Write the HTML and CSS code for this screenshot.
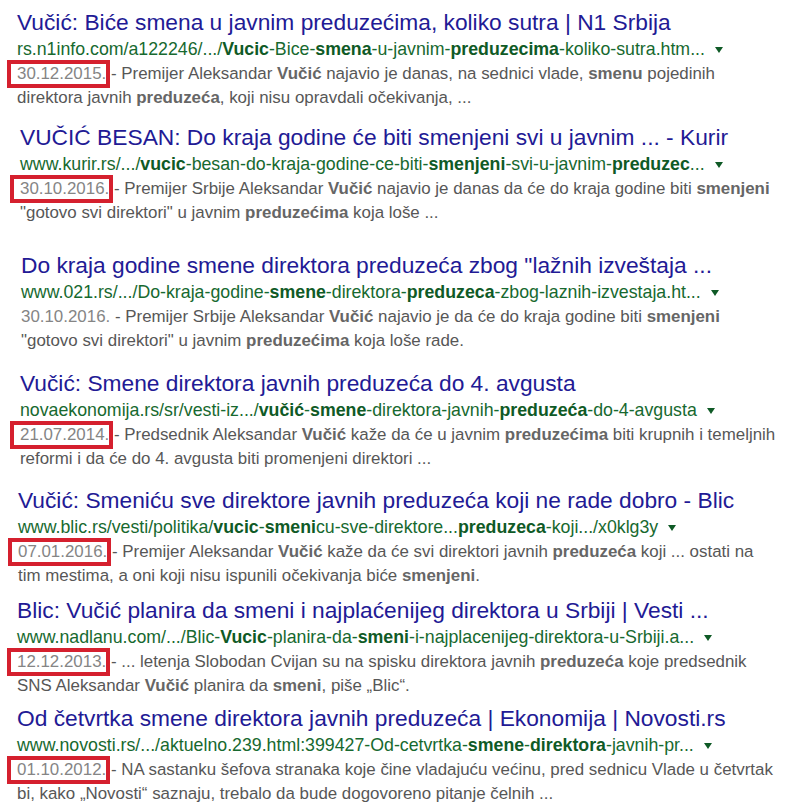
FILE: index.html
```html
<!DOCTYPE html>
<html lang="sr">
<head>
<meta charset="utf-8">
<title>Rezultati pretrage</title>
<link rel="stylesheet" href="styles.css">
</head>
<body>
<div class="results">
  <div class="g r1">
    <h3 class="t">Vučić: Biće smena u javnim preduzećima, koliko sutra | N1 Srbija</h3>
    <div class="u">rs.n1info.com/a122246/.../<b>Vucic</b>-Bice-<b>smena</b>-u-javnim-<b>preduzecima</b>-koliko-sutra.htm...<span class="arr"></span></div>
    <div class="s"><span class="d boxed">30.12.2015.</span> - Premijer Aleksandar <b>Vučić</b> najavio je danas, na sednici vlade, <b>smenu</b> pojedinih<br>direktora javnih <b>preduzeća</b>, koji nisu opravdali očekivanja, ...</div>
  </div>
  <div class="g r2">
    <h3 class="t">VUČIĆ BESAN: Do kraja godine će biti smenjeni svi u javnim ... - Kurir</h3>
    <div class="u">www.kurir.rs/.../<b>vucic</b>-besan-do-kraja-godine-ce-biti-<b>smenjeni</b>-svi-u-javnim-<b>preduzec</b>...<span class="arr"></span></div>
    <div class="s"><span class="d boxed">30.10.2016.</span> - Premijer Srbije Aleksandar <b>Vučić</b> najavio je danas da će do kraja godine biti <b>smenjeni</b><br>"gotovo svi direktori" u javnim <b>preduzećima</b> koja loše ...</div>
  </div>
  <div class="g r3">
    <h3 class="t">Do kraja godine smene direktora preduzeća zbog "lažnih izveštaja ...</h3>
    <div class="u">www.021.rs/.../Do-kraja-godine-<b>smene</b>-direktora-<b>preduzeca</b>-zbog-laznih-izvestaja.ht...<span class="arr"></span></div>
    <div class="s"><span class="d">30.10.2016.</span> - Premijer Srbije Aleksandar <b>Vučić</b> najavio je da će do kraja godine biti <b>smenjeni</b><br>"gotovo svi direktori" u javnim <b>preduzećima</b> koja loše rade.</div>
  </div>
  <div class="g r4">
    <h3 class="t">Vučić: Smene direktora javnih preduzeća do 4. avgusta</h3>
    <div class="u">novaekonomija.rs/sr/vesti-iz.../<b>vučić</b>-<b>smene</b>-direktora-javnih-<b>preduzeća</b>-do-4-avgusta<span class="arr"></span></div>
    <div class="s"><span class="d boxed">21.07.2014.</span> - Predsednik Aleksandar <b>Vučić</b> kaže da će u javnim <b>preduzećima</b> biti krupnih i temeljnih<br>reformi i da će do 4. avgusta biti promenjeni direktori ...</div>
  </div>
  <div class="g r5">
    <h3 class="t">Vučić: Smeniću sve direktore javnih preduzeća koji ne rade dobro - Blic</h3>
    <div class="u">www.blic.rs/vesti/politika/<b>vucic</b>-<b>smeni</b>cu-sve-direktore...<b>preduzeca</b>-koji.../x0klg3y<span class="arr"></span></div>
    <div class="s"><span class="d boxed">07.01.2016.</span> - Premijer Aleksandar <b>Vučić</b> kaže da će svi direktori javnih <b>preduzeća</b> koji ... ostati na<br>tim mestima, a oni koji nisu ispunili očekivanja biće <b>smenjeni</b>.</div>
  </div>
  <div class="g r6">
    <h3 class="t">Blic: Vučić planira da smeni i najplaćenijeg direktora u Srbiji | Vesti ...</h3>
    <div class="u">www.nadlanu.com/.../Blic-<b>Vucic</b>-planira-da-<b>smeni</b>-i-najplacenijeg-direktora-u-Srbiji.a...<span class="arr"></span></div>
    <div class="s"><span class="d boxed">12.12.2013.</span> - ... letenja Slobodan Cvijan su na spisku direktora javnih <b>preduzeća</b> koje predsednik<br>SNS Aleksandar <b>Vučić</b> planira da <b>smeni</b>, piše „Blic“.</div>
  </div>
  <div class="g r7">
    <h3 class="t">Od četvrtka smene direktora javnih preduzeća | Ekonomija | Novosti.rs</h3>
    <div class="u">www.novosti.rs/.../aktuelno.239.html:399427-Od-cetvrtka-<b>smene</b>-<b>direktora</b>-javnih-pr...<span class="arr"></span></div>
    <div class="s"><span class="d boxed">01.10.2012.</span> - NA sastanku šefova stranaka koje čine vladajuću većinu, pred sednicu Vlade u četvrtak<br>bi, kako „Novosti“ saznaju, trebalo da bude dogovoreno pitanje čelnih ...</div>
  </div>
</div>
</body>
</html>
```

FILE: styles.css
```css
html, body {
  margin: 0;
  padding: 0;
  background: #ffffff;
}

body {
  font-family: "Liberation Sans", Arial, sans-serif;
}

.results {
  display: flex;
  flex-direction: column;
  padding-top: 8px;
}

.g {
  padding-left: 17px;
}

.t {
  margin: 0;
  font-weight: normal;
  font-size: 22.75px;
  line-height: 28px;
  color: #221a95;
  white-space: nowrap;
}

.u {
  font-size: 17.75px;
  line-height: 26px;
  color: #17692f;
  white-space: nowrap;
}

.u b {
  font-weight: bold;
  color: #0f5a26;
}

.arr {
  display: inline-block;
  width: 0;
  height: 0;
  margin-left: 10px;
  vertical-align: middle;
  border-left: 4.5px solid transparent;
  border-right: 4.5px solid transparent;
  border-top: 6px solid #0f5a26;
}

.s {
  font-size: 16.9px;
  line-height: 24px;
  color: #575757;
  white-space: nowrap;
}

.s b {
  color: #666666;
  font-weight: bold;
}

.d {
  color: #858585;
}

.boxed {
  position: relative;
}

.boxed::after {
  content: "";
  position: absolute;
  left: -10px;
  right: -4px;
  top: -4px;
  bottom: -5px;
  border: 4px solid #d5202e;
}

.r2 { margin-top: 13px; padding-left: 20px; }
.r3 { margin-top: 26px; padding-left: 21px; }
.r4 { margin-top: 16px; padding-left: 20px; }
.r5 { margin-top: 15px; padding-left: 18px; }
.r6 { margin-top: 8px; }
.r7 { margin-top: 6px; }
```
